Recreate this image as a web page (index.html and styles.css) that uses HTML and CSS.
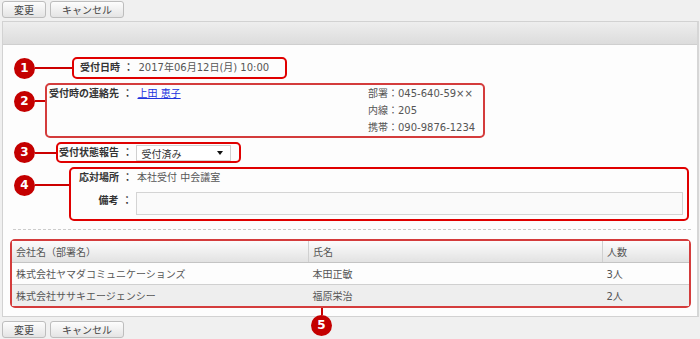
FILE: index.html
```html
<!DOCTYPE html>
<html lang="ja">
<head>
    <meta charset="UTF-8">
    <title>受付詳細</title>
    <link rel="stylesheet" href="styles.css">
</head>
<body>
    <div class="toolbar">
        <button class="btn">変更</button>
        <button class="btn">キャンセル</button>
    </div>

    <div class="panel">
        <div class="panel-head"></div>
        <div class="panel-body">
            <div class="form">
                <!-- 1 -->
                <div class="row">
                    <div class="mark"><span class="num">1</span><span class="wire wire-1"></span></div>
                    <div class="note note-1">
                        <span class="label">受付日時 ：</span><span class="value">2017年06月12日(月) 10:00</span>
                    </div>
                </div>
                <!-- 2 -->
                <div class="row row-tall">
                    <div class="mark"><span class="num">2</span><span class="wire wire-2"></span></div>
                    <div class="note note-2">
                        <span class="label">受付時の連絡先 ：</span>
                        <span class="value value-grow"><a href="#">上田 恵子</a></span>
                        <div class="contact">
                            <div>部署：045-640-59××</div>
                            <div>内線：205</div>
                            <div>携帯：090-9876-1234</div>
                        </div>
                    </div>
                </div>
                <!-- 3 -->
                <div class="row">
                    <div class="mark"><span class="num">3</span><span class="wire wire-3"></span></div>
                    <div class="note note-3">
                        <span class="label">受付状態報告 ：</span>
                        <span class="select-wrap">
                            <select class="select">
                                <option>受付済み</option>
                                <option>未受付</option>
                            </select>
                        </span>
                    </div>
                </div>
                <!-- 4 -->
                <div class="row row-tall">
                    <div class="mark"><span class="num">4</span><span class="wire wire-4"></span></div>
                    <div class="note note-4">
                        <div class="line">
                            <span class="label label-fix">応対場所 ：</span><span class="value">本社受付 中会議室</span>
                        </div>
                        <div class="line line-memo">
                            <span class="label label-fix">備考 ：</span><textarea class="memo"></textarea>
                        </div>
                    </div>
                </div>
            </div>

            <div class="sep"></div>

            <div class="list">
                <table class="grid">
                    <thead>
                        <tr>
                            <th class="col-company">会社名（部署名）</th>
                            <th class="col-name">氏名</th>
                            <th class="col-count">人数</th>
                        </tr>
                    </thead>
                    <tbody>
                        <tr>
                            <td>株式会社ヤマダコミュニケーションズ</td>
                            <td>本田正敏</td>
                            <td>3人</td>
                        </tr>
                        <tr class="alt">
                            <td>株式会社ササキエージェンシー</td>
                            <td>福原栄治</td>
                            <td>2人</td>
                        </tr>
                    </tbody>
                </table>
                <div class="callout"><span class="stem"></span><span class="num">5</span></div>
            </div>
        </div>
    </div>

    <div class="toolbar toolbar-bottom">
        <button class="btn">変更</button>
        <button class="btn">キャンセル</button>
    </div>
</body>
</html>
```

FILE: styles.css
```css
body{
    margin: 0;
    padding: 1px 1px 0 2px;
    background-color: #f0f0f0;
    font-family: "DejaVu Sans", "Noto Sans CJK JP", sans-serif;
    font-size: 10px;
    color: #555555;
}
/* buttons */
.toolbar{
    display: flex;
    gap: 4px;
}
.toolbar-bottom{
    margin-top: 4px;
}
.btn{
    height: 17px;
    padding: 0 11px;
    font: inherit;
    color: #444444;
    background: linear-gradient(#fdfdfd, #e4e4e4);
    border: 1px solid #bdbdbd;
    border-radius: 3px;
}
/* panel */
.panel{
    margin-top: 3px;
    background-color: #fdfdfd;
    border: 1px solid #d2d2d2;
    border-right: 2px solid #d6d6d6;
}
.panel-head{
    height: 22px;
    background: linear-gradient(#eeeeee, #dcdcdc);
    border-bottom: 1px solid #cfcfcf;
}
.panel-body{
    padding: 12px 6px 8px 7px;
}
.form{
    display: flex;
    flex-direction: column;
    gap: 4px;
    margin: 0 2px 0 4px;
}
.row{
    display: flex;
    align-items: center;
}
.mark{
    display: flex;
    align-items: center;
}
.row-tall{
    align-items: flex-start;
}
.row-tall .mark{
    height: 36px;
}
.num{
    width: 21px;
    height: 21px;
    border-radius: 50%;
    background-color: #c40000;
    color: #ffffff;
    font-family: "DejaVu Sans", sans-serif;
    font-weight: bold;
    font-size: 12px;
    line-height: 21px;
    text-align: center;
}
.wire{
    height: 2px;
    background-color: #cc0000;
}
.wire-1{ width: 37px; }
.wire-2{ width: 10px; }
.wire-3{ width: 21px; }
.wire-4{ width: 34px; }
/* red annotation boxes */
.note{
    display: flex;
    align-items: center;
    border: 2px solid #e00000;
    border-radius: 5px;
    line-height: 17px;
}
.note-1{
    width: 215px;
    box-sizing: border-box;
    padding-left: 6px;
    line-height: 18px;
}
.note-2{
    width: 440px;
    box-sizing: border-box;
    padding-left: 2px;
    align-items: flex-start;
    border-color: #d43c3c;
}
.note-3{
    width: 185px;
    box-sizing: border-box;
    padding-left: 1px;
    height: 21px;
}
.note-4{
    flex: 1;
    flex-direction: column;
    align-items: stretch;
    padding: 0 4px 4px 8px;
}
.label{
    color: #333333;
    font-weight: bold;
    white-space: pre;
}
.label-fix{
    width: 53px;
    text-align: right;
}
.value{
    margin-left: 5px;
}
.value-grow{
    flex: 1;
}
.value a{
    color: #2233dd;
}
.contact{
    width: 115px;
}
.line{
    display: flex;
    align-items: flex-start;
}
.line-memo{
    margin-top: 6px;
}
.memo{
    flex: 1;
    height: 23px;
    box-sizing: border-box;
    margin: 0 0 0 4px;
    padding: 2px;
    background-color: #fafafa;
    border: 1px solid #d4d4d4;
    resize: none;
}
/* select box with the arrow drawn over it */
.select-wrap{
    position: relative;
    margin-left: 4px;
}
.select{
    appearance: none;
    width: 95px;
    height: 16px;
    padding: 0 4px;
    font: inherit;
    color: #333333;
    background-color: #ffffff;
    border: 1px solid #d0d0d0;
    border-radius: 0;
    display: block;
}
.select-wrap::after{
    content: '';
    position: absolute;
    top: 6px;
    right: 8px;
    border: 3px solid transparent;
    border-top: 4px solid #111111;
}
.sep{
    margin: 8px 0 9px 3px;
    border-top: 1px dashed #cccccc;
}
/* list */
.list{
    position: relative;
    border: 2px solid #d43c3c;
    border-radius: 5px;
}
.grid{
    width: 100%;
    border-collapse: collapse;
    font-size: 10px;
    color: #555555;
}
.grid th,
.grid td{
    height: 21px;
    padding: 0 4px;
    text-align: left;
    font-weight: normal;
    border-bottom: 1px solid #d0d0d0;
}
.grid th{
    background: linear-gradient(#fcfcfc, #e2e2e2);
    border-bottom-color: #c4c4c4;
}
.grid th + th{
    border-left: 1px solid #d0d0d0;
}
.grid tr:last-child td{
    border-bottom: none;
}
.grid .alt td{
    background-color: #eeeeee;
}
.col-company{ width: 288px; }
.col-count{ width: 78px; }
.callout{
    position: absolute;
    top: 100%;
    left: 299px;
    margin-top: 2px;
    display: flex;
    flex-direction: column;
    align-items: center;
}
.stem{
    width: 2px;
    height: 7px;
    background-color: #cc0000;
}
```
